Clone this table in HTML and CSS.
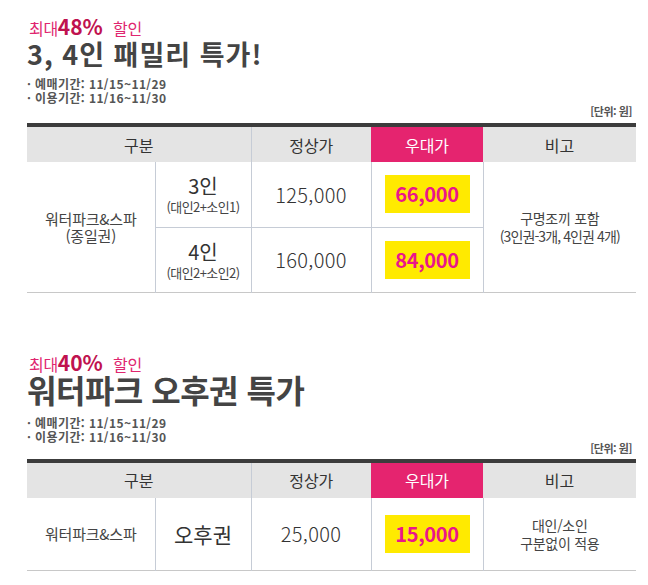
FILE: index.html
```html
<!DOCTYPE html>
<html lang="ko">
<head>
<meta charset="utf-8">
<link rel="stylesheet" href="styles.css">
</head>
<body>
<div class="page">
  <section class="deal">
    <p class="badge">최대<strong>48%</strong> 할인</p>
    <h2 class="title">3, 4인 패밀리 특가!</h2>
    <ul class="dates">
      <li>· 예매기간: 11/15~11/29</li>
      <li>· 이용기간: 11/16~11/30</li>
    </ul>
    <p class="unit">[단위: 원]</p>
    <table class="price">
      <colgroup>
        <col class="c1"><col class="c2"><col class="c3"><col class="c4"><col class="c5">
      </colgroup>
      <thead>
        <tr>
          <th colspan="2">구분</th>
          <th class="sep">정상가</th>
          <th class="hot">우대가</th>
          <th>비고</th>
        </tr>
      </thead>
      <tbody>
        <tr>
          <td rowspan="2" class="name">워터파크&amp;스파<br>(종일권)</td>
          <td class="kind"><span class="big">3인</span><span class="small">(대인2+소인1)</span></td>
          <td class="reg">125,000</td>
          <td class="sale"><span class="tag">66,000</span></td>
          <td rowspan="2" class="note">구명조끼 포함<br><span class="tight">(3인권-3개, 4인권 4개)</span></td>
        </tr>
        <tr>
          <td class="kind"><span class="big">4인</span><span class="small">(대인2+소인2)</span></td>
          <td class="reg">160,000</td>
          <td class="sale"><span class="tag">84,000</span></td>
        </tr>
      </tbody>
    </table>
  </section>

  <section class="deal second">
    <p class="badge">최대<strong>40%</strong> 할인</p>
    <h2 class="title large">워터파크 오후권 특가</h2>
    <ul class="dates">
      <li>· 예매기간: 11/15~11/29</li>
      <li>· 이용기간: 11/16~11/30</li>
    </ul>
    <p class="unit">[단위: 원]</p>
    <table class="price">
      <colgroup>
        <col class="c1"><col class="c2"><col class="c3"><col class="c4"><col class="c5">
      </colgroup>
      <thead>
        <tr>
          <th colspan="2">구분</th>
          <th class="sep">정상가</th>
          <th class="hot">우대가</th>
          <th>비고</th>
        </tr>
      </thead>
      <tbody>
        <tr class="single">
          <td class="name">워터파크&amp;스파</td>
          <td class="kind"><span class="big">오후권</span></td>
          <td class="reg">25,000</td>
          <td class="sale"><span class="tag">15,000</span></td>
          <td class="note">대인/소인<br>구분없이 적용</td>
        </tr>
      </tbody>
    </table>
  </section>
</div>
</body>
</html>
```

FILE: styles.css
```css
* { box-sizing: border-box; }
html, body { margin: 0; padding: 0; background: #fff; }
body {
  font-family: "Noto Sans CJK KR", "Noto Sans", sans-serif;
  color: #333;
}
.page { padding: 17px 12px 0 27px; width: 648px; }
.deal { margin: 0; }
.second { margin-top: 60px; }
.badge {
  margin: 0 0 0 2px;
  font-size: 16px;
  line-height: 18px;
  color: #e0266f;
  letter-spacing: -0.3px;
}
.badge strong {
  font-size: 21px;
  font-weight: 700;
  color: #c0124f;
  margin-right: 6px;
  letter-spacing: 0;
}
.title {
  margin: 1px 0 0;
  font-size: 27px;
  line-height: 32px;
  font-weight: 700;
  color: #444;
  letter-spacing: 1px;
}
.title.large {
  margin-top: 0;
  font-size: 32px;
  line-height: 32px;
  letter-spacing: -0.5px;
}
.dates {
  list-style: none;
  margin: 7px 0 0;
  padding: 0;
  font-size: 12px;
  line-height: 14px;
  font-weight: 700;
  color: #555;
  letter-spacing: 0.4px;
}
.large + .dates { margin-top: 11px; }
.unit {
  margin: -1px 0 0;
  text-align: right;
  font-size: 11px;
  line-height: 14px;
  font-weight: 700;
  color: #555;
  letter-spacing: -0.5px;
  padding-right: 4px;
}
.second .unit { margin-top: -3px; }
.price {
  margin-top: 5px;
  width: 609px;
  border-collapse: collapse;
  table-layout: fixed;
  border-top: 4px solid #3c3c3c;
  border-bottom: 1px solid #c8c8c8;
}
.second .price { margin-top: 4px; }
.c1 { width: 128px; }
.c2 { width: 96px; }
.c3 { width: 120px; }
.c4 { width: 112px; }
.c5 { width: 153px; }
th {
  height: 37px;
  padding: 0;
  background: #e4e4e4;
  font-size: 16px;
  font-weight: 400;
  color: #333;
}
th.sep { border-left: 1px solid #c6ccd6; }
th.hot { background: #e5246f; color: #fff; }
td {
  padding: 0;
  text-align: center;
  vertical-align: middle;
  border-left: 1px solid #c6ccd6;
  border-top: 1px solid #c6ccd6;
  height: 65px;
}
td.name { border-left: 0; font-size: 15px; line-height: 17px; letter-spacing: -0.2px; color: #444; }
thead + tbody tr:first-child td { border-top: 0; }
td.note { font-size: 14px; line-height: 18px; letter-spacing: -0.3px; color: #444; }
.tight { letter-spacing: -0.9px; }
.kind .big { display: block; font-size: 20px; line-height: 24px; margin-bottom: 1px; }
.kind .small { display: block; font-size: 13px; line-height: 15px; letter-spacing: -0.6px; color: #444; }
.reg { font-size: 20px; font-weight: 300; color: #333; letter-spacing: 0.3px; }
.tag {
  display: inline-block;
  width: 85px;
  height: 38px;
  line-height: 38px;
  background: #ffea00;
  color: #ea168b;
  font-size: 20px;
  font-weight: 700;
  letter-spacing: -0.3px;
}
.single td { height: 73px; }
.single .kind .big { font-size: 21px; margin: 0; }
```
